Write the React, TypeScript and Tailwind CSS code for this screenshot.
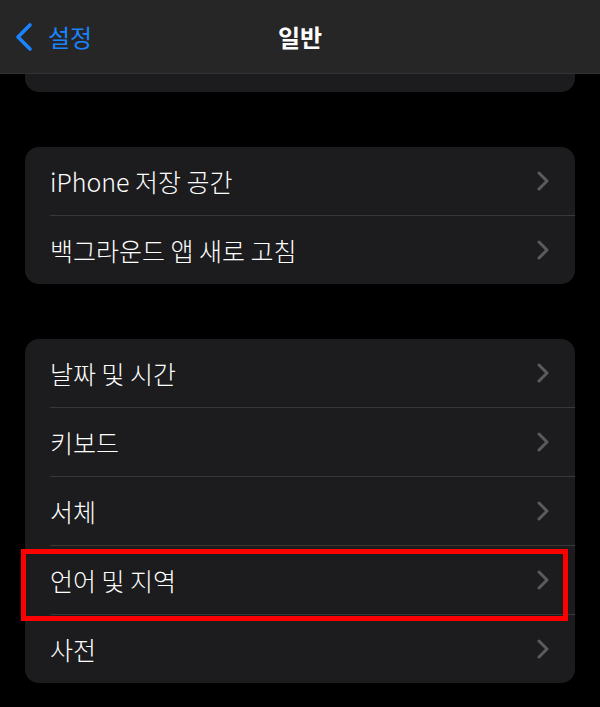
import { Fragment } from "react"

const font = { fontFamily: '"Noto Sans CJK KR", "Noto Sans", sans-serif' }

function Chevron() {
  return (
    <svg width="12" height="20" viewBox="0 0 12 20" className="shrink-0">
      <path d="M2 2 L10 10 L2 18" fill="none" stroke="#5b5b5f" strokeWidth="3" strokeLinecap="round" strokeLinejoin="round" />
    </svg>
  )
}

function Row({ label, highlight }: { label: string; highlight?: boolean }) {
  return (
    <div className="relative flex h-[68px] items-center justify-between pl-[25px] pr-[26px]">
      <span className="text-[25px] font-light leading-none text-white">{label}</span>
      <Chevron />
      {highlight && (
        <div className="pointer-events-none absolute -left-[4px] top-[3px] h-[72px] w-[547px] border-[5px] border-[#ff0000]" />
      )}
    </div>
  )
}

function Group({ items, highlight }: { items: string[]; highlight?: string }) {
  return (
    <div className="mx-[25px] rounded-[14px] bg-[#1c1c1e]">
      {items.map((item, i) => (
        <Fragment key={item}>
          {i > 0 && <div className="ml-[25px] h-px bg-[#38383a]" />}
          <Row label={item} highlight={item === highlight} />
        </Fragment>
      ))}
    </div>
  )
}

export default function App() {
  return (
    <div className="h-[707px] w-[600px] overflow-hidden bg-black" style={font}>
      <div className="flex h-[74px] items-center border-b border-[#333335] bg-[#262626] px-[15px]">
        <div className="flex w-[150px] items-center gap-[15px] text-[#1a84ff]">
          <svg width="18" height="30" viewBox="0 0 18 30">
            <path d="M15 3 L3 15 L15 27" fill="none" stroke="#1a84ff" strokeWidth="3.6" strokeLinecap="round" strokeLinejoin="round" />
          </svg>
          <span className="text-[24px] leading-none">설정</span>
        </div>
        <div className="flex-1 text-center text-[24px] font-semibold leading-none text-white">일반</div>
        <div className="w-[150px]" />
      </div>
      <div className="mx-[25px] h-[18px] rounded-b-[14px] bg-[#1c1c1e]" />
      <div className="h-[55px]" />
      <Group items={["iPhone 저장 공간", "백그라운드 앱 새로 고침"]} />
      <div className="h-[55px]" />
      <Group items={["날짜 및 시간", "키보드", "서체", "언어 및 지역", "사전"]} highlight="언어 및 지역" />
    </div>
  )
}
